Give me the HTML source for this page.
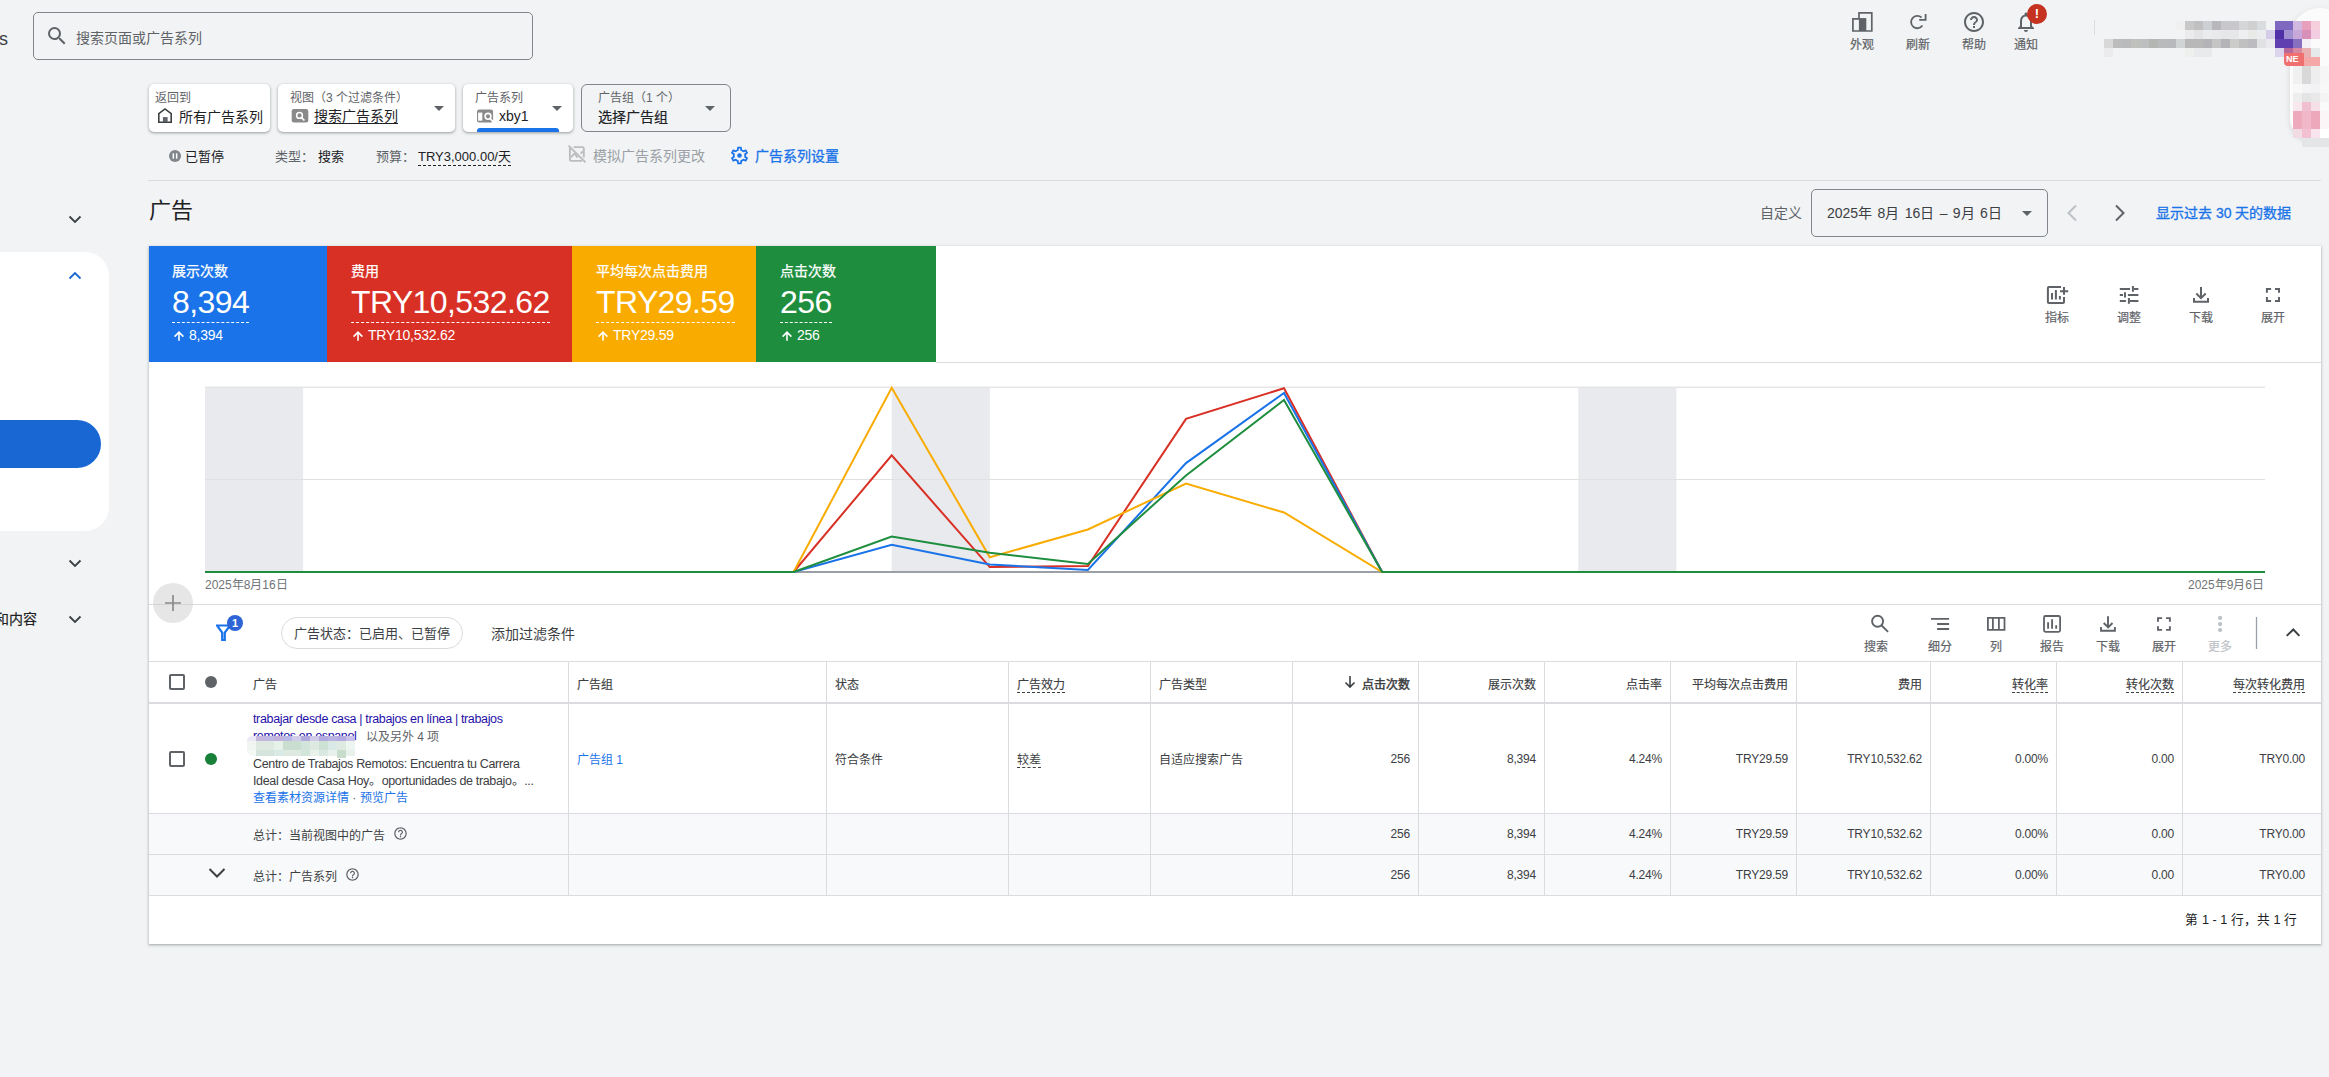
<!DOCTYPE html>
<html lang="zh-CN"><head><meta charset="utf-8">
<style>
*{box-sizing:border-box;margin:0;padding:0}
html,body{width:2329px;height:1077px;overflow:hidden;background:#f1f3f4;font-family:"Liberation Sans",sans-serif;color:#202124;position:relative}
.a{position:absolute;white-space:nowrap;line-height:1}
.ic{position:absolute;display:block}
.g{color:#5f6368}
.card{position:absolute;background:#fff;border-radius:5px;box-shadow:0 1px 2px rgba(60,64,67,.3),0 1px 3px 1px rgba(60,64,67,.15)}
.lbl{font-size:12px;color:#5f6368}
.val{font-size:14px;color:#202124}
.tri{position:absolute;width:0;height:0;border-left:5px solid transparent;border-right:5px solid transparent;border-top:5px solid #5f6368}
.hl{position:absolute;height:1px;background:#dadce0}
.vl{position:absolute;width:1px;background:#dadce0}
.dash{border-bottom:1px dashed #202124}
.m{-webkit-text-stroke:0.2px currentColor}
</style></head><body>
<!-- ===== TOP BAR ===== -->
<div class="a" style="left:-1px;top:30px;font-size:18px;color:#3c4043">s</div>
<div class="a" style="left:33px;top:12px;width:500px;height:48px;border:1px solid #80868b;border-radius:5px"></div>
<svg class="ic" style="left:45px;top:24px" width="24" height="24" viewBox="0 0 24 24"><path fill="#5f6368" d="M15.5 14h-.79l-.28-.27A6.47 6.47 0 0 0 16 9.5 6.5 6.5 0 1 0 9.5 16c1.61 0 3.09-.59 4.23-1.57l.27.28v.79l5 4.99L20.49 19l-4.99-5zm-6 0C7.01 14 5 11.99 5 9.5S7.01 5 9.5 5 14 7.01 14 9.5 11.99 14 9.5 14z"/></svg>
<div class="a" style="left:76px;top:31px;font-size:14px;color:#5f6368">搜索页面或广告系列</div>

<!-- top right icons -->
<svg class="ic" style="left:1845px;top:5px" width="90" height="32" viewBox="1845 5 90 32"><path d="M1852.9 31V18.9H1859V12.9H1871.8V31Z" fill="none" stroke="#5f6368" stroke-width="1.7"/><rect x="1858.9" y="18.1" width="7.4" height="12.9" fill="#5f6368"/>
<path d="M1922.4 25.6A6.2 6.2 0 1 1 1921.5 17.5" fill="none" stroke="#5f6368" stroke-width="1.8"/><path d="M1919.2 19.9H1925.6V14.1" fill="none" stroke="#5f6368" stroke-width="1.8"/></svg>
<svg class="ic" style="left:1962px;top:10px" width="24" height="24" viewBox="0 0 24 24"><path fill="#5f6368" d="M11 18h2v-2h-2v2zm1-16C6.48 2 2 6.48 2 12s4.48 10 10 10 10-4.48 10-10S17.52 2 12 2zm0 18c-4.41 0-8-3.59-8-8s3.59-8 8-8 8 3.59 8 8-3.59 8-8 8zm0-14c-2.21 0-4 1.79-4 4h2c0-1.1.9-2 2-2s2 .9 2 2c0 2-3 1.75-3 5h2c0-2.25 3-2.5 3-5 0-2.21-1.79-4-4-4z"/></svg>
<svg class="ic" style="left:2014px;top:10px" width="24" height="24" viewBox="0 0 24 24"><path fill="#5f6368" d="M12 22c1.1 0 2-.9 2-2h-4c0 1.1.89 2 2 2zm6-6v-5c0-3.07-1.64-5.64-4.5-6.32V4c0-.83-.67-1.5-1.5-1.5s-1.5.67-1.5 1.5v.68C7.63 5.36 6 7.92 6 11v5l-2 2v1h16v-1l-2-2zm-2 1H8v-6c0-2.48 1.51-4.5 4-4.5s4 2.02 4 4.5v6z"/></svg>
<div class="a" style="left:2027px;top:4px;width:20px;height:20px;border-radius:50%;background:#c5321f;color:#fff;font-size:13px;font-weight:bold;text-align:center;line-height:20px">!</div>
<div class="a lbl m" style="left:1850px;top:39px">外观</div>
<div class="a lbl m" style="left:1906px;top:39px">刷新</div>
<div class="a lbl m" style="left:1962px;top:39px">帮助</div>
<div class="a lbl m" style="left:2014px;top:39px">通知</div>
<div class="vl" style="left:2094px;top:20px;height:15px;background:#dadce0"></div>
<!--S:acct--><div class="a" style="left:2290px;top:8px;width:60px;height:131px;background:#fbfbfb;border-radius:30px 30px 12px 20px;box-shadow:0 2px 6px rgba(0,0,0,.12)"></div><div class="a" style="left:2176px;top:21px;width:9px;height:9px;background:#eff0ef"></div><div class="a" style="left:2185px;top:21px;width:9px;height:9px;background:#c8c8c8"></div><div class="a" style="left:2194px;top:21px;width:9px;height:9px;background:#c0c0c0"></div><div class="a" style="left:2203px;top:21px;width:9px;height:9px;background:#ccd0d4"></div><div class="a" style="left:2212px;top:21px;width:9px;height:9px;background:#b8b8bc"></div><div class="a" style="left:2221px;top:21px;width:9px;height:9px;background:#c8c8cc"></div><div class="a" style="left:2230px;top:21px;width:9px;height:9px;background:#c8c8cc"></div><div class="a" style="left:2239px;top:21px;width:9px;height:9px;background:#d4d6d8"></div><div class="a" style="left:2248px;top:21px;width:9px;height:9px;background:#d0d0d0"></div><div class="a" style="left:2257px;top:21px;width:9px;height:9px;background:#d8dcde"></div><div class="a" style="left:2185px;top:30px;width:9px;height:9px;background:#ebebed"></div><div class="a" style="left:2194px;top:30px;width:9px;height:9px;background:#e4e4e6"></div><div class="a" style="left:2203px;top:30px;width:9px;height:9px;background:#eaebed"></div><div class="a" style="left:2212px;top:30px;width:9px;height:9px;background:#e8e9eb"></div><div class="a" style="left:2221px;top:30px;width:9px;height:9px;background:#e6e7e9"></div><div class="a" style="left:2230px;top:30px;width:9px;height:9px;background:#e6e7e9"></div><div class="a" style="left:2239px;top:30px;width:9px;height:9px;background:#eeeff1"></div><div class="a" style="left:2248px;top:30px;width:9px;height:9px;background:#e8eae8"></div><div class="a" style="left:2257px;top:30px;width:9px;height:9px;background:#ebecee"></div><div class="a" style="left:2266px;top:30px;width:9px;height:9px;background:#d4cce8"></div><div class="a" style="left:2275px;top:30px;width:9px;height:9px;background:#5030a8"></div><div class="a" style="left:2284px;top:30px;width:9px;height:9px;background:#a090d0"></div><div class="a" style="left:2293px;top:30px;width:9px;height:9px;background:#c8a8d8"></div><div class="a" style="left:2302px;top:30px;width:9px;height:9px;background:#d890b8"></div><div class="a" style="left:2311px;top:30px;width:9px;height:9px;background:#f2cce0"></div><div class="a" style="left:2104px;top:39px;width:9px;height:9px;background:#d8d8d8"></div><div class="a" style="left:2113px;top:39px;width:9px;height:9px;background:#bcbcbc"></div><div class="a" style="left:2122px;top:39px;width:9px;height:9px;background:#b8babc"></div><div class="a" style="left:2131px;top:39px;width:9px;height:9px;background:#c0c0bc"></div><div class="a" style="left:2140px;top:39px;width:9px;height:9px;background:#bcbec0"></div><div class="a" style="left:2149px;top:39px;width:9px;height:9px;background:#b4b6b4"></div><div class="a" style="left:2158px;top:39px;width:9px;height:9px;background:#b8babc"></div><div class="a" style="left:2167px;top:39px;width:9px;height:9px;background:#b8b9bd"></div><div class="a" style="left:2176px;top:39px;width:9px;height:9px;background:#d0d4d4"></div><div class="a" style="left:2185px;top:39px;width:9px;height:9px;background:#b8b8b8"></div><div class="a" style="left:2194px;top:39px;width:9px;height:9px;background:#b8b8b8"></div><div class="a" style="left:2203px;top:39px;width:9px;height:9px;background:#b4b4b8"></div><div class="a" style="left:2212px;top:39px;width:9px;height:9px;background:#c4c4c4"></div><div class="a" style="left:2221px;top:39px;width:9px;height:9px;background:#b4b4b8"></div><div class="a" style="left:2230px;top:39px;width:9px;height:9px;background:#ccccca"></div><div class="a" style="left:2239px;top:39px;width:9px;height:9px;background:#c0c0c0"></div><div class="a" style="left:2248px;top:39px;width:9px;height:9px;background:#bcbcc0"></div><div class="a" style="left:2257px;top:39px;width:9px;height:9px;background:#e0e1e3"></div><div class="a" style="left:2266px;top:39px;width:9px;height:9px;background:#eaeaee"></div><div class="a" style="left:2275px;top:39px;width:9px;height:9px;background:#6040b0"></div><div class="a" style="left:2284px;top:39px;width:9px;height:9px;background:#6040b0"></div><div class="a" style="left:2293px;top:39px;width:9px;height:9px;background:#8870c0"></div><div class="a" style="left:2302px;top:39px;width:9px;height:9px;background:#f2f0f4"></div><div class="a" style="left:2104px;top:48px;width:9px;height:9px;background:#ebebed"></div><div class="a" style="left:2185px;top:48px;width:9px;height:9px;background:#eef0ee"></div><div class="a" style="left:2194px;top:48px;width:9px;height:9px;background:#e8eaeb"></div><div class="a" style="left:2203px;top:48px;width:9px;height:9px;background:#e8eaeb"></div><div class="a" style="left:2275px;top:48px;width:9px;height:9px;background:#dcd4ec"></div><div class="a" style="left:2284px;top:48px;width:9px;height:9px;background:#b86898"></div><div class="a" style="left:2293px;top:48px;width:9px;height:9px;background:#d888a0"></div><div class="a" style="left:2302px;top:48px;width:9px;height:9px;background:#e8b0b0"></div><div class="a" style="left:2311px;top:48px;width:9px;height:9px;background:#e6eaea"></div><div class="a" style="left:2275px;top:21px;width:9px;height:9px;background:#7e68c0"></div><div class="a" style="left:2284px;top:21px;width:9px;height:9px;background:#7e68c0"></div><div class="a" style="left:2293px;top:21px;width:9px;height:9px;background:#d0b8e0"></div><div class="a" style="left:2302px;top:21px;width:9px;height:9px;background:#e8a0bc"></div><div class="a" style="left:2311px;top:21px;width:9px;height:9px;background:#f5d0dc"></div><div class="a" style="left:2302px;top:57px;width:18px;height:9px;background:#f5a8a8"></div><div class="a" style="left:2284px;top:53px;width:20px;height:13px;background:#f07070;border-radius:0 0 0 4px;color:#fff;font-size:9px;font-weight:bold;line-height:13px;padding-left:2px;overflow:hidden">NE</div><div class="a" style="left:2293px;top:66px;width:9px;height:18px;background:#f0f0f0"></div><div class="a" style="left:2302px;top:66px;width:9px;height:18px;background:#d8d8d8"></div><div class="a" style="left:2311px;top:66px;width:9px;height:18px;background:#eeeeee"></div><div class="a" style="left:2320px;top:66px;width:9px;height:18px;background:#f6f6f6"></div><div class="a" style="left:2293px;top:84px;width:9px;height:9px;background:#f8f8f8"></div><div class="a" style="left:2302px;top:84px;width:9px;height:9px;background:#f4f4f6"></div><div class="a" style="left:2311px;top:84px;width:9px;height:9px;background:#f2f2f4"></div><div class="a" style="left:2320px;top:84px;width:9px;height:9px;background:#f8f8f8"></div><div class="a" style="left:2293px;top:93px;width:9px;height:9px;background:#eeeeee"></div><div class="a" style="left:2302px;top:93px;width:9px;height:9px;background:#e4e4e4"></div><div class="a" style="left:2311px;top:93px;width:9px;height:9px;background:#e8e8e8"></div><div class="a" style="left:2320px;top:93px;width:9px;height:9px;background:#f4f4f4"></div><div class="a" style="left:2293px;top:102px;width:9px;height:9px;background:#f8e8ee"></div><div class="a" style="left:2302px;top:102px;width:9px;height:9px;background:#f0c0d0"></div><div class="a" style="left:2311px;top:102px;width:9px;height:9px;background:#f5e0e8"></div><div class="a" style="left:2320px;top:102px;width:9px;height:9px;background:#fafafa"></div><div class="a" style="left:2293px;top:111px;width:9px;height:18px;background:#eeaabc"></div><div class="a" style="left:2302px;top:111px;width:9px;height:18px;background:#f0b8c8"></div><div class="a" style="left:2311px;top:111px;width:9px;height:18px;background:#eea8bc"></div><div class="a" style="left:2320px;top:111px;width:9px;height:18px;background:#fbf5f7"></div><div class="a" style="left:2293px;top:129px;width:9px;height:9px;background:#f2dce4"></div><div class="a" style="left:2302px;top:129px;width:9px;height:9px;background:#f2c0d0"></div><div class="a" style="left:2311px;top:129px;width:9px;height:9px;background:#f8e4ec"></div><div class="a" style="left:2320px;top:129px;width:9px;height:9px;background:#ffffff"></div><div class="a" style="left:2302px;top:138px;width:27px;height:9px;background:#e4e5e6"></div><!--E:acct-->

<!-- ===== LEFT NAV ===== -->
<div class="a" style="left:0;top:252px;width:109px;height:279px;background:#fff;border-radius:0 24px 24px 0"></div>
<div class="a" style="left:0;top:420px;width:101px;height:48px;background:#1967d2;border-radius:0 24px 24px 0"></div>
<svg class="ic" style="left:67px;top:211px" width="16" height="16" viewBox="0 0 16 16"><path d="M2.5 5.5 8 11l5.5-5.5" fill="none" stroke="#3c4043" stroke-width="1.8"/></svg>
<svg class="ic" style="left:67px;top:268px" width="16" height="16" viewBox="0 0 16 16"><path d="M2.5 10.5 8 5l5.5 5.5" fill="none" stroke="#1967d2" stroke-width="1.8"/></svg>
<svg class="ic" style="left:67px;top:555px" width="16" height="16" viewBox="0 0 16 16"><path d="M2.5 5.5 8 11l5.5-5.5" fill="none" stroke="#3c4043" stroke-width="1.8"/></svg>
<svg class="ic" style="left:67px;top:611px" width="16" height="16" viewBox="0 0 16 16"><path d="M2.5 5.5 8 11l5.5-5.5" fill="none" stroke="#3c4043" stroke-width="1.8"/></svg>
<div class="a m" style="left:-5px;top:612px;font-size:14px;color:#202124">和内容</div>


<!-- ===== BREADCRUMB ===== -->
<div class="card" style="left:149px;top:84px;width:121px;height:48px"></div>
<div class="a lbl" style="left:155px;top:92px">返回到</div>
<svg class="ic" style="left:150px;top:104px" width="30" height="24" viewBox="150 104 30 24"><path d="M158.8 122.2V113.7L165 108.9L171.2 113.7V122.2Z" fill="none" stroke="#3c4043" stroke-width="1.6" stroke-linejoin="miter"/><rect x="162.9" y="117.1" width="4.7" height="5" fill="#5f6368"/></svg>
<div class="a val" style="left:179px;top:110px">所有广告系列</div>

<div class="card" style="left:278px;top:84px;width:177px;height:48px"></div>
<div class="a lbl" style="left:290px;top:92px">视图（3 个过滤条件）</div>
<svg class="ic" style="left:285px;top:104px" width="30" height="24" viewBox="285 104 30 24"><rect x="291.7" y="109.1" width="16.6" height="13.4" rx="2.2" fill="#8a8a8a"/><circle cx="299.5" cy="115.4" r="2.9" fill="none" stroke="#fff" stroke-width="1.5"/><path d="M301.6 117.6 304.4 120.5" stroke="#fff" stroke-width="1.7"/></svg>
<div class="a val" style="left:314px;top:109px;text-decoration:underline;text-underline-offset:2px">搜索广告系列</div>
<div class="tri" style="left:434px;top:106px"></div>

<div class="card" style="left:463px;top:84px;width:110px;height:48px"></div>
<div class="a lbl" style="left:475px;top:92px">广告系列</div>
<svg class="ic" style="left:470px;top:104px" width="30" height="24" viewBox="470 104 30 24"><rect x="477" y="109.4" width="16.1" height="13" rx="2.2" fill="#8a8a8a"/><rect x="478.1" y="112.6" width="4.2" height="8.1" fill="#fff"/><circle cx="488" cy="116.3" r="2.9" fill="none" stroke="#fff" stroke-width="1.6"/><path d="M490.1 118.5 492.9 121.6" stroke="#fff" stroke-width="1.7"/></svg>
<div class="a val" style="left:499px;top:109px">xby1</div>
<div class="tri" style="left:552px;top:106px"></div>
<div class="a" style="left:477px;top:128px;width:82px;height:4px;background:#1a73e8;border-radius:3px 3px 0 0"></div>

<div class="a" style="left:581px;top:84px;width:150px;height:48px;border:1px solid #80868b;border-radius:6px"></div>
<div class="a lbl" style="left:598px;top:92px">广告组（1 个）</div>
<div class="a val m" style="left:598px;top:110px">选择广告组</div>
<div class="tri" style="left:705px;top:106px"></div>

<!-- status row -->
<svg class="ic" style="left:169px;top:150px" width="12" height="12" viewBox="0 0 12 12"><circle cx="6" cy="6" r="6" fill="#80868b"/><rect x="3.6" y="3.3" width="1.5" height="5.4" fill="#fff"/><rect x="6.9" y="3.3" width="1.5" height="5.4" fill="#fff"/></svg>
<div class="a" style="left:185px;top:150px;font-size:13px">已暂停</div>
<div class="a g" style="left:275px;top:150px;font-size:13px">类型：</div>
<div class="a" style="left:318px;top:150px;font-size:13px">搜索</div>
<div class="a g" style="left:376px;top:150px;font-size:13px">预算：</div>
<div class="a dash" style="left:418px;top:150px;font-size:13px;padding-bottom:2px">TRY3,000.00/天</div>
<svg class="ic" style="left:560px;top:140px" width="30" height="28" viewBox="560 140 30 28"><g fill="none" stroke="#bdbdbd" stroke-width="1.9"><path d="M568.5 145.6 585.4 162.3"/><path d="M569.9 147.9V159.5Q569.9 160.9 571.3 160.9H582"/><path d="M573.6 147.1H582.4Q583.8 147.1 583.8 148.5V157.5"/><path d="M570.9 157.3 574.5 153.4 577.6 157.6M580.6 153.6 582.8 151.4"/></g></svg>
<div class="a" style="left:593px;top:149px;font-size:14px;color:#9aa0a6">模拟广告系列更改</div>
<svg class="ic" style="left:729px;top:145px" width="21" height="21" viewBox="0 0 24 24"><path fill="#1a73e8" d="M19.43 12.98c.04-.32.07-.64.07-.98 0-.34-.03-.66-.07-.98l2.11-1.650c.19-.15.24-.42.12-.64l-2-3.46a.5.5 0 0 0-.61-.22l-2.49 1c-.52-.4-1.08-.73-1.690-.98l-.38-2.65A.488.488 0 0 0 14 2h-4c-.25 0-.46.18-.49.42l-.38 2.65c-.61.25-1.17.59-1.69.98l-2.490-1a.566.566 0 0 0-.18-.03c-.17 0-.34.09-.43.25l-2 3.46c-.13.22-.07.49.12.64l2.11 1.65c-.04.32-.07.65-.07.98 0 .33.03.66.07.98l-2.11 1.65c-.19.15-.24.42-.12.64l2 3.46a.5.5 0 0 0 .61.22l2.49-1c.52.4 1.08.73 1.69.98l.38 2.65c.03.24.24.42.49.42h4c.25 0 .46-.18.49-.42l.38-2.65c.61-.25 1.17-.59 1.69-.98l2.49 1c.06.02.12.03.18.03.17 0 .34-.09.43-.25l2-3.46c.12-.22.07-.49-.12-.64l-2.11-1.65zm-1.98-1.71c.04.31.05.52.05.73 0 .21-.02.43-.05.73l-.14 1.13.89.7 1.08.84-.7 1.21-1.27-.51-1.04-.42-.9.68c-.43.32-.84.56-1.25.73l-1.06.43-.16 1.13-.2 1.35h-1.4l-.19-1.350-.16-1.13-1.06-.43c-.43-.18-.83-.41-1.23-.71l-.91-.7-1.06.43-1.27.51-.7-1.21 1.08-.84.89-.7-.14-1.13c-.03-.31-.05-.54-.05-.74s.02-.43.05-.73l.14-1.13-.89-.7-1.08-.84.7-1.21 1.27.51 1.04.42.9-.68c.43-.32.84-.56 1.25-.73l1.06-.43.16-1.13.2-1.35h1.39l.19 1.35.16 1.13 1.06.43c.43.18.83.41 1.23.71l.91.7 1.06-.43 1.27-.51.7 1.21-1.07.85-.89.7.14 1.13z"/><circle cx="12" cy="12" r="2.6" fill="#1a73e8"/></svg>
<div class="a" style="left:755px;top:149px;font-size:14px;color:#1a73e8;-webkit-text-stroke:0.3px currentColor">广告系列设置</div>
<div class="hl" style="left:148px;top:180px;width:2173px"></div>


<!-- ===== MAIN ===== -->
<div class="a" style="left:149px;top:200px;font-size:22px;color:#202124">广告</div>
<div class="a g" style="left:1760px;top:206px;font-size:14px">自定义</div>
<div class="a" style="left:1811px;top:189px;width:237px;height:48px;border:1px solid #80868b;border-radius:5px"></div>
<div class="a" style="left:1827px;top:206px;font-size:14px;color:#3c4043;word-spacing:1.5px">2025年 8月 16日 – 9月 6日</div>
<div class="tri" style="left:2022px;top:211px"></div>
<svg class="ic" style="left:2062px;top:203px" width="20" height="20" viewBox="0 0 20 20"><path d="M14 2.5 6.5 10 14 17.5" fill="none" stroke="#bdc1c6" stroke-width="2"/></svg>
<svg class="ic" style="left:2110px;top:203px" width="20" height="20" viewBox="0 0 20 20"><path d="M6 2.5 13.5 10 6 17.5" fill="none" stroke="#5f6368" stroke-width="2"/></svg>
<div class="a" style="left:2156px;top:206px;font-size:14px;color:#1a73e8;-webkit-text-stroke:0.3px currentColor">显示过去 30 天的数据</div>

<!-- panel -->
<div class="a" style="left:149px;top:246px;width:2172px;height:698px;background:#fff;box-shadow:0 1px 2px rgba(60,64,67,.3),0 1px 3px 1px rgba(60,64,67,.12)"></div>
<div class="a" style="left:149px;top:246px;width:178px;height:116px;background:#1a73e8"></div>
<div class="a" style="left:327px;top:246px;width:245px;height:116px;background:#d93025"></div>
<div class="a" style="left:572px;top:246px;width:184px;height:116px;background:#f9ab00"></div>
<div class="a" style="left:756px;top:246px;width:180px;height:116px;background:#1e8e3e"></div>
<div class="hl" style="left:936px;top:362px;width:1385px"></div>
<div class="a" style="left:172px;top:264px;font-size:14px;color:#fff;-webkit-text-stroke:0.25px currentColor">展示次数</div>
<div class="a" style="left:172px;top:287px;font-size:32px;letter-spacing:-0.6px;color:#fff;border-bottom:1px dashed #fff;padding-bottom:4px;line-height:31px">8,394</div>
<svg class="ic" style="left:174px;top:330px" width="10" height="11" viewBox="0 0 10 11"><path d="M5 10.8V2M0.6 6.6 5 2.2 9.4 6.6" fill="none" stroke="#fff" stroke-width="1.6"/></svg>
<div class="a" style="left:189px;top:328px;font-size:14px;letter-spacing:-0.25px;color:#fff">8,394</div>
<div class="a" style="left:351px;top:264px;font-size:14px;color:#fff;-webkit-text-stroke:0.25px currentColor">费用</div>
<div class="a" style="left:351px;top:287px;font-size:32px;letter-spacing:-0.6px;color:#fff;border-bottom:1px dashed #fff;padding-bottom:4px;line-height:31px">TRY10,532.62</div>
<svg class="ic" style="left:353px;top:330px" width="10" height="11" viewBox="0 0 10 11"><path d="M5 10.8V2M0.6 6.6 5 2.2 9.4 6.6" fill="none" stroke="#fff" stroke-width="1.6"/></svg>
<div class="a" style="left:368px;top:328px;font-size:14px;letter-spacing:-0.25px;color:#fff">TRY10,532.62</div>
<div class="a" style="left:596px;top:264px;font-size:14px;color:#fff;-webkit-text-stroke:0.25px currentColor">平均每次点击费用</div>
<div class="a" style="left:596px;top:287px;font-size:32px;letter-spacing:-0.6px;color:#fff;border-bottom:1px dashed #fff;padding-bottom:4px;line-height:31px">TRY29.59</div>
<svg class="ic" style="left:598px;top:330px" width="10" height="11" viewBox="0 0 10 11"><path d="M5 10.8V2M0.6 6.6 5 2.2 9.4 6.6" fill="none" stroke="#fff" stroke-width="1.6"/></svg>
<div class="a" style="left:613px;top:328px;font-size:14px;letter-spacing:-0.25px;color:#fff">TRY29.59</div>
<div class="a" style="left:780px;top:264px;font-size:14px;color:#fff;-webkit-text-stroke:0.25px currentColor">点击次数</div>
<div class="a" style="left:780px;top:287px;font-size:32px;letter-spacing:-0.6px;color:#fff;border-bottom:1px dashed #fff;padding-bottom:4px;line-height:31px">256</div>
<svg class="ic" style="left:782px;top:330px" width="10" height="11" viewBox="0 0 10 11"><path d="M5 10.8V2M0.6 6.6 5 2.2 9.4 6.6" fill="none" stroke="#fff" stroke-width="1.6"/></svg>
<div class="a" style="left:797px;top:328px;font-size:14px;letter-spacing:-0.25px;color:#fff">256</div>
<svg class="ic" style="left:2040px;top:280px" width="250" height="30" viewBox="2040 280 250 30"><g fill="none" stroke="#5f6368" stroke-width="2"><path d="M2061 286.9H2048.9Q2047.9 286.9 2047.9 287.9V302Q2047.9 302.9 2048.9 302.9H2063Q2064 302.9 2064 302V297.1"/><path d="M2064 287V294.7M2060 291.3H2068.2"/><path d="M2052 293.1V299.6M2055.9 290.1V299.6M2059.9 296V299.6"/>
<path d="M2119.8 288.9H2130M2134 288.9H2138.4M2132.9 286.1V291.7M2119.8 295H2123M2127.9 295H2138.4M2125 292.2V297.6M2119.8 301H2125.9M2130 301H2138.4M2128.9 298V303.7"/>
<path d="M2201 287V298M2196.3 293.5 2201 298.2 2205.7 293.5M2194 298V301.7H2208V298"/>
<path d="M2266.9 292.8V289H2271.1M2275 289H2279V292.8M2279 297.1V301H2275M2271.1 301H2266.9V297.1"/></g></svg>
<div class="a lbl m" style="left:2045px;top:312px">指标</div>
<div class="a lbl m" style="left:2117px;top:312px">调整</div>
<div class="a lbl m" style="left:2189px;top:312px">下载</div>
<div class="a lbl m" style="left:2261px;top:312px">展开</div>
<svg class="ic" style="left:0;top:0" width="2329" height="1077" viewBox="0 0 2329 1077"><rect x="205.0" y="387" width="98.1" height="185" fill="#e8eaed"/><rect x="891.7" y="387" width="98.1" height="185" fill="#e8eaed"/><rect x="1578.3" y="387" width="98.1" height="185" fill="#e8eaed"/><path d="M205 387.3H2265" stroke="#e6e6e6" stroke-width="1.6"/><path d="M205 479.5H2265" stroke="#e0e0e0" stroke-width="1"/><path d="M205 572H2265" stroke="#9aa0a6" stroke-width="2"/><path d="M205 572L793.6 572.0 L891.7 455.3 L989.8 567.1 L1087.9 566.0 L1186.0 418.9 L1284.0 388.3 L1382.1 572.0 L2265 572" fill="none" stroke="#d93025" stroke-width="2" stroke-linejoin="miter"/><path d="M205 572L793.6 572.0 L891.7 544.7 L989.8 564.5 L1087.9 570.0 L1186.0 463.1 L1284.0 392.9 L1382.1 572.0 L2265 572" fill="none" stroke="#1a73e8" stroke-width="2" stroke-linejoin="miter"/><path d="M205 572L793.6 572.0 L891.7 387.7 L989.8 557.3 L1087.9 529.5 L1186.0 483.6 L1284.0 512.5 L1382.1 572.0 L2265 572" fill="none" stroke="#f9ab00" stroke-width="2" stroke-linejoin="miter"/><path d="M205 572L793.6 572.0 L891.7 536.5 L989.8 552.8 L1087.9 564.0 L1186.0 475.4 L1284.0 400.0 L1382.1 572.0 L2265 572" fill="none" stroke="#1e8e3e" stroke-width="2" stroke-linejoin="miter"/><path d="M205 572H793.4M1381.9 572H2265" stroke="#1e8e3e" stroke-width="2"/></svg>
<div class="a" style="left:205px;top:579px;font-size:12px;color:#707478">2025年8月16日</div>
<div class="a" style="left:2188px;top:579px;font-size:12px;color:#707478">2025年9月6日</div>
<div class="hl" style="left:149px;top:604px;width:2172px"></div>
<div class="a" style="left:153px;top:583px;width:40px;height:40px;border-radius:50%;background:rgba(200,200,200,.45)"></div>
<svg class="ic" style="left:164px;top:594px" width="18" height="18" viewBox="0 0 18 18"><path d="M9 1v16M1 9h16" stroke="#8a8a8a" stroke-width="1.7"/></svg>

<svg class="ic" style="left:216px;top:624px" width="15" height="17" viewBox="0 0 15 17"><path d="M1 1.5h13L8.8 8.5V16H6.2V8.5z" fill="none" stroke="#1a73e8" stroke-width="2.2" stroke-linejoin="miter"/></svg>
<div class="a" style="left:227px;top:615px;width:16px;height:16px;border-radius:50%;background:#2d64d6;color:#fff;font-size:11px;font-weight:bold;text-align:center;line-height:16px">1</div>
<div class="a" style="left:281px;top:617px;width:182px;height:32px;border:1px solid #dadce0;border-radius:16px"></div>
<div class="a" style="left:294px;top:627px;font-size:13px;color:#3c4043">广告状态：已启用、已暂停</div>
<div class="a" style="left:491px;top:627px;font-size:14px;color:#3c4043">添加过滤条件</div>
<svg class="ic" style="left:1860px;top:605px" width="460" height="50" viewBox="1860 605 460 50"><g fill="none" stroke="#5f6368" stroke-width="1.9">
<circle cx="1877.6" cy="621.3" r="5.5"/><path d="M1881.6 625.5 1888.1 631.9"/>
<path d="M1931 618.9H1949.1M1937.1 624H1949.1M1937.1 629H1949.1"/>
<path d="M1987.9 617.9H2004.5V629.9H1987.9Z M1992.9 617.9V629.9M1998.9 617.9V629.9" stroke-width="1.8"/>
<rect x="2044" y="616" width="16.1" height="15.8" rx="1.5" stroke-width="1.8"/><path d="M2048.1 622.2V628.8M2052.1 619.2V628.8M2056.2 625.2V628.8"/>
<path d="M2108 616.2V627M2103.7 623 2108.2 627.3 2112.5 623M2101 627.1V630.8H2114.9V627.1"/>
<path d="M2158 621.7V618.1H2162.1M2166 618.1H2169.9V621.7M2169.9 626.2V629.9H2166M2162.1 629.9H2158V626.2"/>
<path d="M2286.7 635.9 2293.3 629.5 2299.4 635.9" stroke="#3c4043" stroke-width="2"/>
</g><circle cx="2220.1" cy="617.9" r="2.1" fill="#bdc1c6"/><circle cx="2220.1" cy="624.1" r="2.1" fill="#bdc1c6"/><circle cx="2220.1" cy="630" r="2.1" fill="#bdc1c6"/>
<path d="M2256.5 617V649" stroke="#9aa0a6" stroke-width="1.3"/></svg>
<div class="a lbl m" style="left:1864px;top:641px">搜索</div>
<div class="a lbl m" style="left:1928px;top:641px">细分</div>
<div class="a lbl m" style="left:1990px;top:641px">列</div>
<div class="a lbl m" style="left:2040px;top:641px">报告</div>
<div class="a lbl m" style="left:2096px;top:641px">下载</div>
<div class="a lbl m" style="left:2152px;top:641px">展开</div>
<div class="a lbl m" style="left:2208px;top:641px;color:#bdc1c6">更多</div>
<div class="hl" style="left:149px;top:661px;width:2172px"></div>

<!--S:table--><div class="a" style="left:149px;top:813px;width:2172px;height:82px;background:#f8f9fa"></div>
<div class="a" style="left:149px;top:702px;width:2172px;height:2px;background:#dadce0"></div>
<div class="hl" style="left:149px;top:813px;width:2172px"></div>
<div class="hl" style="left:149px;top:854px;width:2172px"></div>
<div class="hl" style="left:149px;top:895px;width:2172px"></div>
<div class="vl" style="left:568px;top:661px;height:234px"></div>
<div class="vl" style="left:826px;top:661px;height:234px"></div>
<div class="vl" style="left:1008px;top:661px;height:234px"></div>
<div class="vl" style="left:1150px;top:661px;height:234px"></div>
<div class="vl" style="left:1292px;top:661px;height:234px"></div>
<div class="vl" style="left:1418px;top:661px;height:234px"></div>
<div class="vl" style="left:1544px;top:661px;height:234px"></div>
<div class="vl" style="left:1670px;top:661px;height:234px"></div>
<div class="vl" style="left:1796px;top:661px;height:234px"></div>
<div class="vl" style="left:1930px;top:661px;height:234px"></div>
<div class="vl" style="left:2056px;top:661px;height:234px"></div>
<div class="vl" style="left:2182px;top:661px;height:234px"></div>
<div class="a" style="left:169px;top:674px;width:16px;height:16px;border:2px solid #5f6368;border-radius:2px"></div>
<div class="a" style="left:205px;top:676px;width:12px;height:12px;border-radius:50%;background:#5f6368"></div>
<div class="a" style="left:253px;top:679px;font-size:12px;color:#3c4043;-webkit-text-stroke:0.15px currentColor">广告</div>
<div class="a" style="left:577px;top:679px;font-size:12px;color:#3c4043;-webkit-text-stroke:0.15px currentColor">广告组</div>
<div class="a" style="left:835px;top:679px;font-size:12px;color:#3c4043;-webkit-text-stroke:0.15px currentColor">状态</div>
<div class="a" style="left:1017px;top:679px;font-size:12px;color:#3c4043;-webkit-text-stroke:0.15px currentColor;border-bottom:1px dashed #3c4043;padding-bottom:1px">广告效力</div>
<div class="a" style="left:1159px;top:679px;font-size:12px;color:#3c4043;-webkit-text-stroke:0.15px currentColor">广告类型</div>
<div class="a" style="right:919px;top:679px;font-size:12px;color:#3c4043;-webkit-text-stroke:0.45px currentColor">点击次数</div>
<div class="a" style="right:793px;top:679px;font-size:12px;color:#3c4043;-webkit-text-stroke:0.15px currentColor">展示次数</div>
<div class="a" style="right:667px;top:679px;font-size:12px;color:#3c4043;-webkit-text-stroke:0.15px currentColor">点击率</div>
<div class="a" style="right:541px;top:679px;font-size:12px;color:#3c4043;-webkit-text-stroke:0.15px currentColor">平均每次点击费用</div>
<div class="a" style="right:407px;top:679px;font-size:12px;color:#3c4043;-webkit-text-stroke:0.15px currentColor">费用</div>
<div class="a" style="right:281px;top:679px;font-size:12px;color:#3c4043;-webkit-text-stroke:0.15px currentColor;border-bottom:1px dashed #3c4043;padding-bottom:1px">转化率</div>
<div class="a" style="right:155px;top:679px;font-size:12px;color:#3c4043;-webkit-text-stroke:0.15px currentColor;border-bottom:1px dashed #3c4043;padding-bottom:1px">转化次数</div>
<div class="a" style="right:24px;top:679px;font-size:12px;color:#3c4043;-webkit-text-stroke:0.15px currentColor;border-bottom:1px dashed #3c4043;padding-bottom:1px">每次转化费用</div>
<svg class="ic" style="left:1344px;top:675px" width="12" height="14" viewBox="0 0 12 14"><path d="M6 1v11M1.5 7.5 6 12l4.5-4.5" fill="none" stroke="#3c4043" stroke-width="1.6"/></svg>
<div class="a" style="left:169px;top:751px;width:16px;height:16px;border:2px solid #5f6368;border-radius:2px"></div>
<div class="a" style="left:205px;top:753px;width:12px;height:12px;border-radius:50%;background:#188038"></div>
<div class="a" style="left:253px;top:713px;font-size:12.5px;letter-spacing:-0.35px;color:#1f10a8">trabajar desde casa | trabajos en línea | trabajos</div>
<div class="a" style="left:253px;top:730px;font-size:12.5px;letter-spacing:-0.35px;color:#1f10a8">remotos en espanol</div>
<div class="a" style="left:366px;top:731px;font-size:12px;color:#5f6368">以及另外 4 项</div>
<!--S:blob--><div class="a" style="left:247px;top:736px;width:9px;height:5px;background:#ebe7f5;border-top-left-radius:8px;"></div><div class="a" style="left:247px;top:741px;width:9px;height:9px;background:#f1f5f1"></div><div class="a" style="left:247px;top:750px;width:9px;height:6px;background:#f5f9f5;border-bottom-left-radius:8px;"></div><div class="a" style="left:256px;top:736px;width:9px;height:5px;background:#c6b6dd;"></div><div class="a" style="left:256px;top:741px;width:9px;height:9px;background:#dde9e1"></div><div class="a" style="left:256px;top:750px;width:9px;height:6px;background:#d5e5dd;"></div><div class="a" style="left:265px;top:736px;width:9px;height:5px;background:#beb9e1;"></div><div class="a" style="left:265px;top:741px;width:9px;height:9px;background:#dde9e1"></div><div class="a" style="left:265px;top:750px;width:9px;height:6px;background:#d5e5dd;"></div><div class="a" style="left:274px;top:736px;width:9px;height:5px;background:#c2b2da;"></div><div class="a" style="left:274px;top:741px;width:9px;height:9px;background:#e5f1e9"></div><div class="a" style="left:274px;top:750px;width:9px;height:6px;background:#d9e9e5;"></div><div class="a" style="left:283px;top:736px;width:9px;height:5px;background:#bab9e5;"></div><div class="a" style="left:283px;top:741px;width:9px;height:9px;background:#c9ddd1"></div><div class="a" style="left:283px;top:750px;width:9px;height:6px;background:#dde9e1;"></div><div class="a" style="left:292px;top:736px;width:9px;height:5px;background:#d2cde9;"></div><div class="a" style="left:292px;top:741px;width:9px;height:9px;background:#c9ddd1"></div><div class="a" style="left:292px;top:750px;width:9px;height:6px;background:#dde9e1;"></div><div class="a" style="left:301px;top:736px;width:9px;height:5px;background:#b2aadd;"></div><div class="a" style="left:301px;top:741px;width:9px;height:9px;background:#d1e5dd"></div><div class="a" style="left:301px;top:750px;width:9px;height:6px;background:#d1e5d9;"></div><div class="a" style="left:310px;top:736px;width:9px;height:5px;background:#d2cae9;"></div><div class="a" style="left:310px;top:741px;width:9px;height:9px;background:#dde9e1"></div><div class="a" style="left:310px;top:750px;width:9px;height:6px;background:#e9f1ed;"></div><div class="a" style="left:319px;top:736px;width:9px;height:5px;background:#b2aae1;"></div><div class="a" style="left:319px;top:741px;width:9px;height:9px;background:#cde1d5"></div><div class="a" style="left:319px;top:750px;width:9px;height:6px;background:#d9e9e1;"></div><div class="a" style="left:328px;top:736px;width:9px;height:5px;background:#bab2e1;"></div><div class="a" style="left:328px;top:741px;width:9px;height:9px;background:#d9e9e5"></div><div class="a" style="left:328px;top:750px;width:9px;height:6px;background:#e9f1ed;"></div><div class="a" style="left:337px;top:736px;width:9px;height:5px;background:#b2aae1;"></div><div class="a" style="left:337px;top:741px;width:9px;height:9px;background:#dde9e1"></div><div class="a" style="left:337px;top:750px;width:9px;height:8px;background:#c9ddcd;"></div><div class="a" style="left:346px;top:736px;width:9px;height:5px;background:#c8c0e8;"></div><div class="a" style="left:346px;top:741px;width:9px;height:9px;background:#edf5f1"></div><div class="a" style="left:346px;top:750px;width:9px;height:6px;background:#e9f1ed;"></div><!--E:blob-->
<div class="a" style="left:253px;top:758px;font-size:12.5px;letter-spacing:-0.35px;color:#3c4043">Centro de Trabajos Remotos: Encuentra tu Carrera</div>
<div class="a" style="left:253px;top:775px;font-size:12.5px;letter-spacing:-0.35px;color:#3c4043">Ideal desde Casa Hoy。oportunidades de trabajo。...</div>
<div class="a" style="left:253px;top:792px;font-size:12px;color:#1a73e8">查看素材资源详情 <span style="color:#5f6368">·</span> 预览广告</div>
<div class="a" style="left:577px;top:754px;font-size:12px;color:#1a73e8">广告组 1</div>
<div class="a" style="left:835px;top:754px;font-size:12px;color:#3c4043">符合条件</div>
<div class="a" style="left:1017px;top:754px;font-size:12px;color:#3c4043;border-bottom:1px dashed #3c4043;padding-bottom:1px">较差</div>
<div class="a" style="left:1159px;top:754px;font-size:12px;color:#3c4043">自适应搜索广告</div>
<div class="a" style="right:919px;top:753px;font-size:12px;letter-spacing:-0.2px;color:#3c4043">256</div>
<div class="a" style="right:793px;top:753px;font-size:12px;letter-spacing:-0.2px;color:#3c4043">8,394</div>
<div class="a" style="right:667px;top:753px;font-size:12px;letter-spacing:-0.2px;color:#3c4043">4.24%</div>
<div class="a" style="right:541px;top:753px;font-size:12px;letter-spacing:-0.2px;color:#3c4043">TRY29.59</div>
<div class="a" style="right:407px;top:753px;font-size:12px;letter-spacing:-0.2px;color:#3c4043">TRY10,532.62</div>
<div class="a" style="right:281px;top:753px;font-size:12px;letter-spacing:-0.2px;color:#3c4043">0.00%</div>
<div class="a" style="right:155px;top:753px;font-size:12px;letter-spacing:-0.2px;color:#3c4043">0.00</div>
<div class="a" style="right:24px;top:753px;font-size:12px;letter-spacing:-0.2px;color:#3c4043">TRY0.00</div>
<div class="a" style="right:919px;top:828px;font-size:12px;letter-spacing:-0.2px;color:#3c4043">256</div>
<div class="a" style="right:793px;top:828px;font-size:12px;letter-spacing:-0.2px;color:#3c4043">8,394</div>
<div class="a" style="right:667px;top:828px;font-size:12px;letter-spacing:-0.2px;color:#3c4043">4.24%</div>
<div class="a" style="right:541px;top:828px;font-size:12px;letter-spacing:-0.2px;color:#3c4043">TRY29.59</div>
<div class="a" style="right:407px;top:828px;font-size:12px;letter-spacing:-0.2px;color:#3c4043">TRY10,532.62</div>
<div class="a" style="right:281px;top:828px;font-size:12px;letter-spacing:-0.2px;color:#3c4043">0.00%</div>
<div class="a" style="right:155px;top:828px;font-size:12px;letter-spacing:-0.2px;color:#3c4043">0.00</div>
<div class="a" style="right:24px;top:828px;font-size:12px;letter-spacing:-0.2px;color:#3c4043">TRY0.00</div>
<div class="a" style="right:919px;top:869px;font-size:12px;letter-spacing:-0.2px;color:#3c4043">256</div>
<div class="a" style="right:793px;top:869px;font-size:12px;letter-spacing:-0.2px;color:#3c4043">8,394</div>
<div class="a" style="right:667px;top:869px;font-size:12px;letter-spacing:-0.2px;color:#3c4043">4.24%</div>
<div class="a" style="right:541px;top:869px;font-size:12px;letter-spacing:-0.2px;color:#3c4043">TRY29.59</div>
<div class="a" style="right:407px;top:869px;font-size:12px;letter-spacing:-0.2px;color:#3c4043">TRY10,532.62</div>
<div class="a" style="right:281px;top:869px;font-size:12px;letter-spacing:-0.2px;color:#3c4043">0.00%</div>
<div class="a" style="right:155px;top:869px;font-size:12px;letter-spacing:-0.2px;color:#3c4043">0.00</div>
<div class="a" style="right:24px;top:869px;font-size:12px;letter-spacing:-0.2px;color:#3c4043">TRY0.00</div>
<div class="a" style="left:253px;top:830px;font-size:12px;color:#3c4043">总计：当前视图中的广告</div>
<svg class="ic" style="left:393px;top:826px" width="15" height="15" viewBox="0 0 24 24"><path fill="#5f6368" d="M11 18h2v-2h-2v2zm1-16C6.48 2 2 6.48 2 12s4.48 10 10 10 10-4.48 10-10S17.52 2 12 2zm0 18c-4.41 0-8-3.59-8-8s3.59-8 8-8 8 3.59 8 8-3.59 8-8 8zm0-14c-2.21 0-4 1.79-4 4h2c0-1.1.9-2 2-2s2 .9 2 2c0 2-3 1.75-3 5h2c0-2.25 3-2.5 3-5 0-2.21-1.79-4-4-4z"/></svg>
<svg class="ic" style="left:208px;top:867px" width="18" height="12" viewBox="0 0 18 12"><path d="M1.5 2 9 9.5 16.5 2" fill="none" stroke="#3c4043" stroke-width="2"/></svg>
<div class="a" style="left:253px;top:871px;font-size:12px;color:#3c4043">总计：广告系列</div>
<svg class="ic" style="left:345px;top:867px" width="15" height="15" viewBox="0 0 24 24"><path fill="#5f6368" d="M11 18h2v-2h-2v2zm1-16C6.48 2 2 6.48 2 12s4.48 10 10 10 10-4.48 10-10S17.52 2 12 2zm0 18c-4.41 0-8-3.59-8-8s3.59-8 8-8 8 3.59 8 8-3.59 8-8 8zm0-14c-2.21 0-4 1.79-4 4h2c0-1.1.9-2 2-2s2 .9 2 2c0 2-3 1.75-3 5h2c0-2.25 3-2.5 3-5 0-2.21-1.79-4-4-4z"/></svg>
<div class="a" style="right:32px;top:914px;font-size:12.7px;color:#202124">第 1 - 1 行，共 1 行</div>
<!--E:table-->



</body></html>
